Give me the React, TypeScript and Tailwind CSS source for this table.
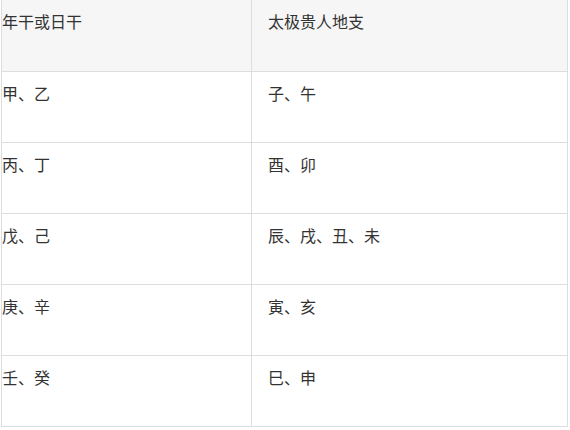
const rows = [
  ["甲、乙", "子、午"],
  ["丙、丁", "酉、卯"],
  ["戊、己", "辰、戌、丑、未"],
  ["庚、辛", "寅、亥"],
  ["壬、癸", "巳、申"],
];

export default function App() {
  return (
    <div className="w-[570px] h-[430px] bg-white overflow-hidden font-['Microsoft_YaHei','Noto_Sans_CJK_SC',sans-serif] text-[16px] leading-6 text-[#333]">
      <div className="ml-px w-[567px] border-x border-[#ddd]">
        {/* header */}
        <div className="grid grid-cols-[250px_1fr] h-[72px] border-b border-[#ddd] bg-[#f6f6f6]">
          <div className="border-r border-[#ddd] pt-[9px]">年干或日干</div>
          <div className="pt-[9px] pl-4">太极贵人地支</div>
        </div>
        {rows.map(([a, b]) => (
          <div key={a} className="grid grid-cols-[250px_1fr] h-[71px] border-b border-[#ddd]">
            <div className="border-r border-[#ddd] pt-[9px]">{a}</div>
            <div className="pt-[9px] pl-4">{b}</div>
          </div>
        ))}
      </div>
    </div>
  );
}
